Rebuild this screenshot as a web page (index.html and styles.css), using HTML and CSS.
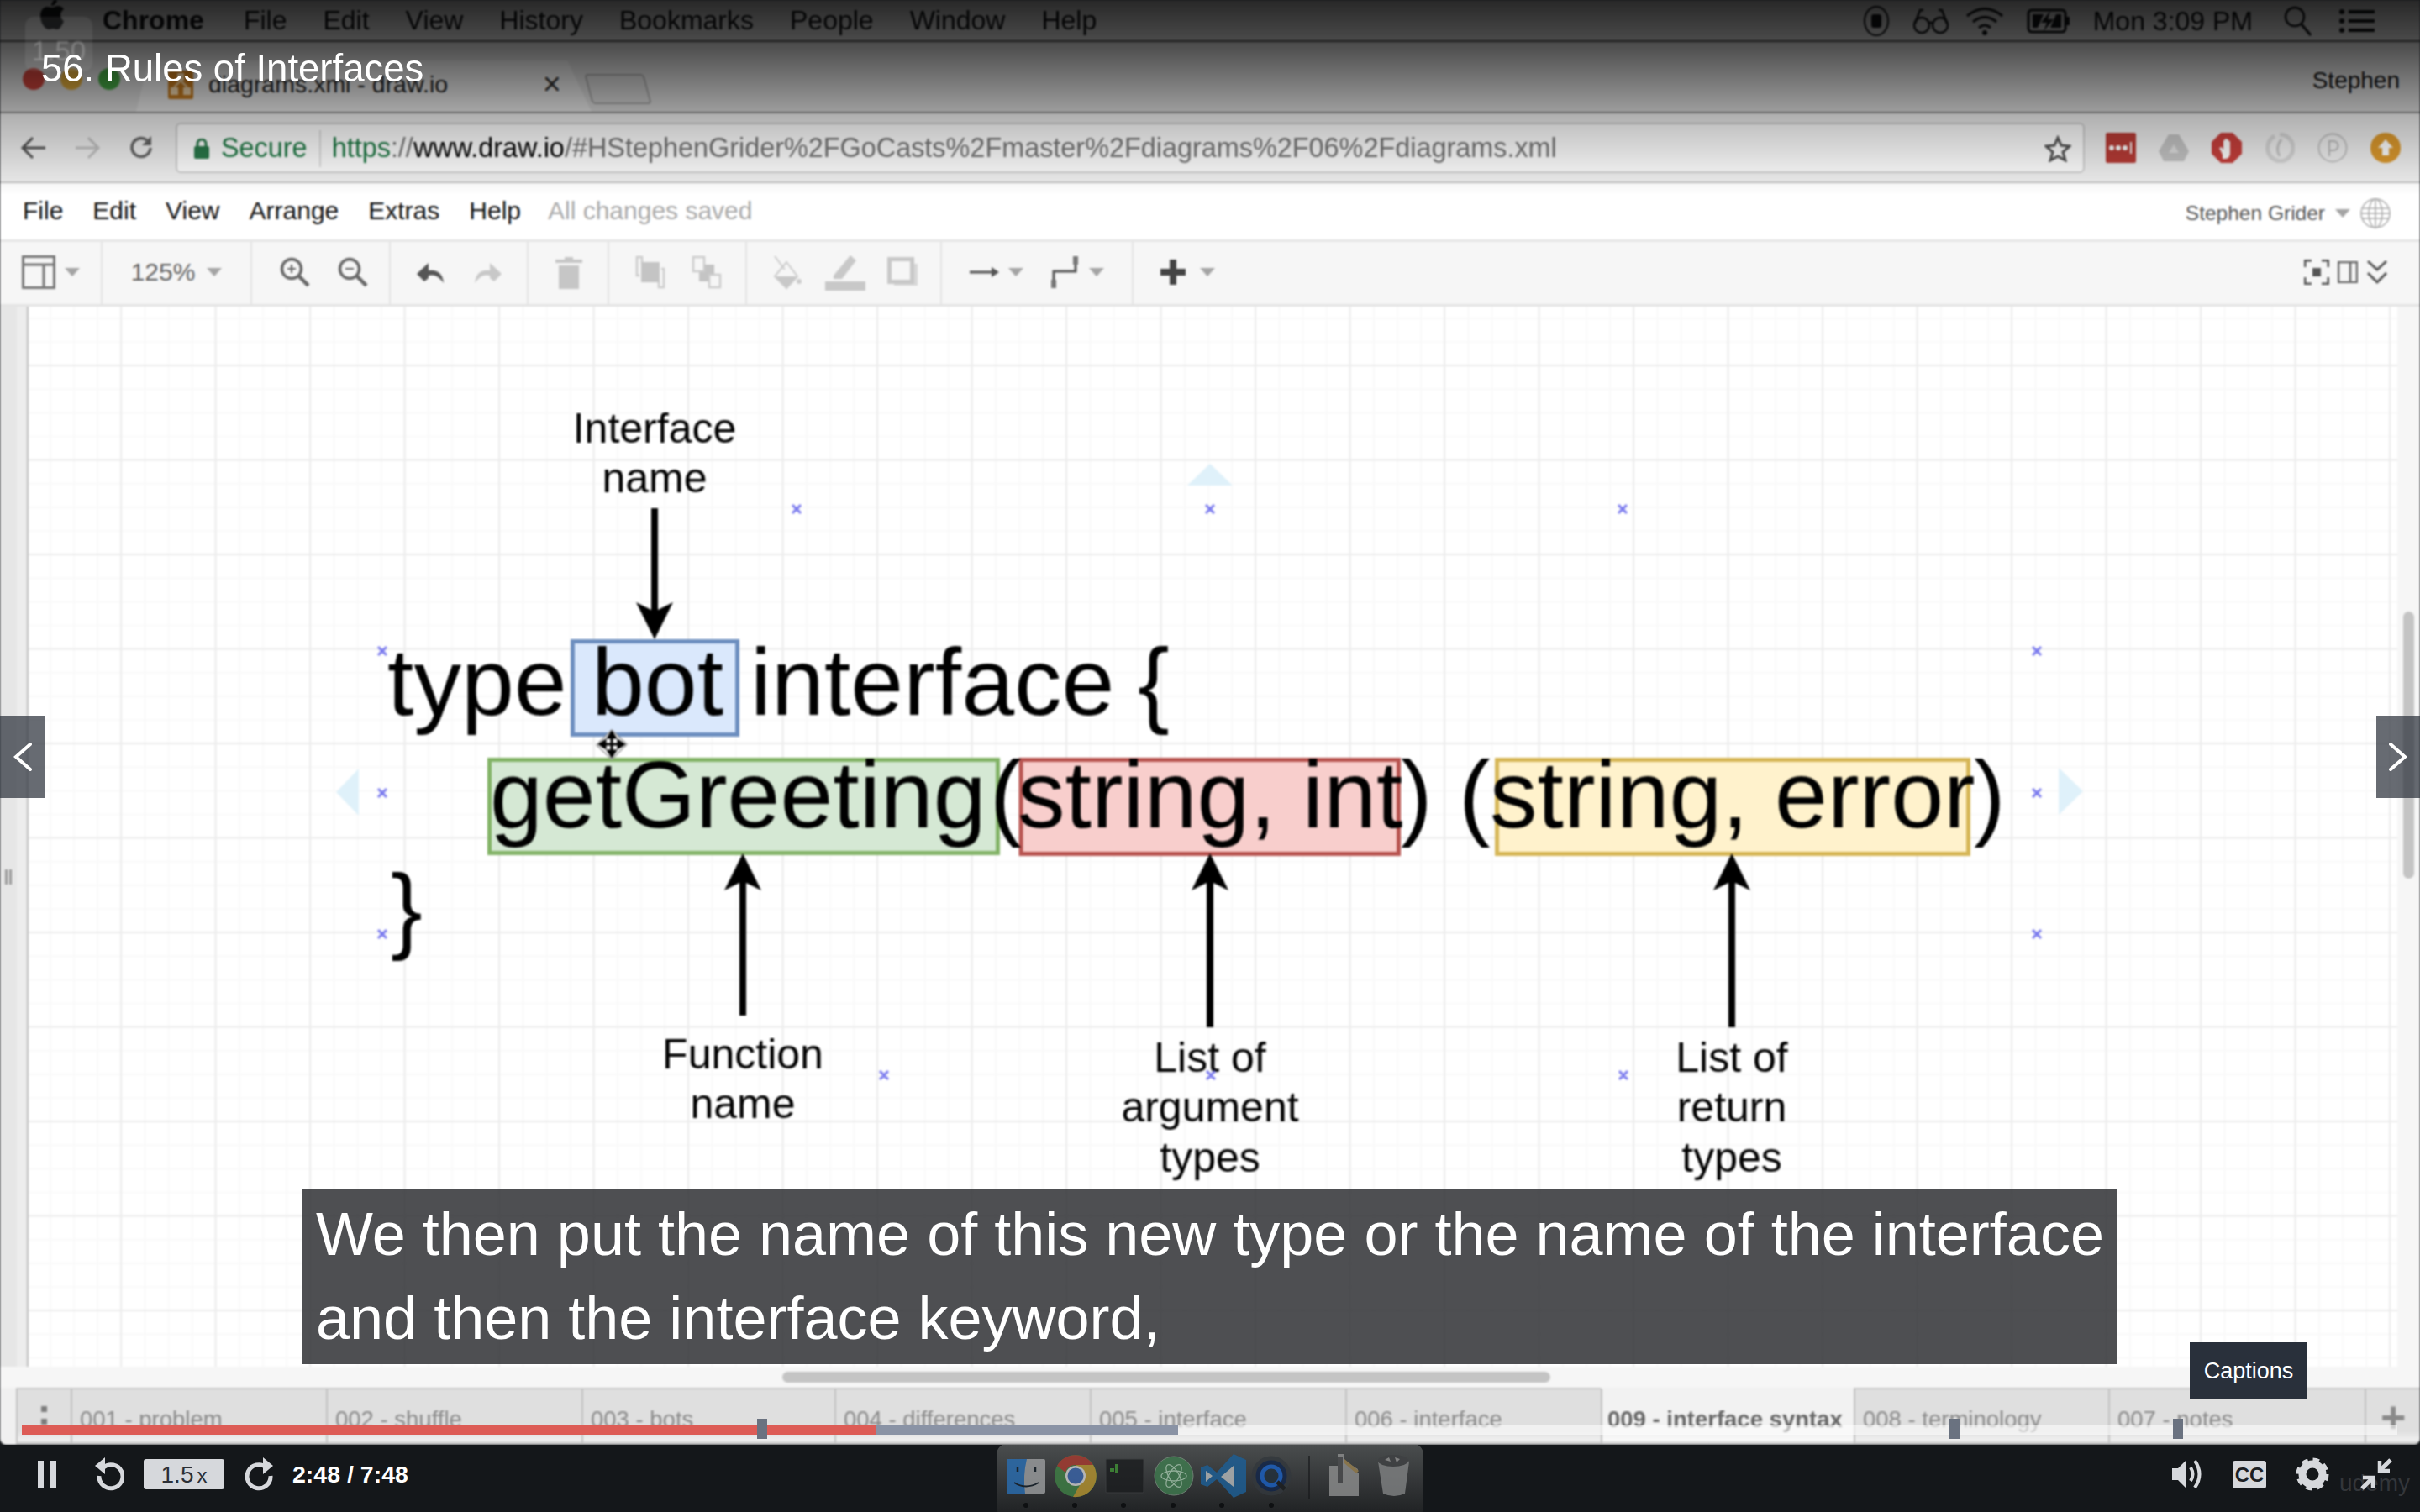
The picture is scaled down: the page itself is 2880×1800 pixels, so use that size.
FILE: index.html
```html
<!DOCTYPE html>
<html lang="en">
<head>
<meta charset="utf-8">
<title>56. Rules of Interfaces</title>
<link rel="stylesheet" href="styles.css">
</head>
<body>
<div class="player">
  <div class="screen">
    <header class="menubar">
      <svg class="apple" width="28" height="36" viewBox="0 0 28 36"><path d="M20 0c0 4-3 8-7 8 0-4 3-8 7-8zM14 10c2 0 4-2 7-2 3 0 5 1 7 4-3 2-4 4-4 7 0 3 2 6 4 7-2 5-5 10-8 10-2 0-3-1-5-1s-3 1-5 1C5 36 0 27 0 20 0 13 4 9 8 9c2 0 4 1 6 1z" fill="#15171a"/></svg>
      <span class="mb-item mb-app">Chrome</span>
      <span class="mb-item">File</span><span class="mb-item">Edit</span><span class="mb-item">View</span><span class="mb-item">History</span><span class="mb-item">Bookmarks</span><span class="mb-item">People</span><span class="mb-item">Window</span><span class="mb-item">Help</span>
      <div class="mb-status">
        <svg width="32" height="38" viewBox="0 0 32 38"><ellipse cx="16" cy="19" rx="14" ry="17" fill="none" stroke="#15171a" stroke-width="2"/><rect x="10" y="11" width="12" height="16" rx="3" fill="#15171a"/></svg>
        <svg class="mb-glasses" width="44" height="34" viewBox="0 0 44 34"><g fill="none" stroke="#15171a" stroke-width="2.500"><circle cx="11" cy="22" r="9"/><circle cx="33" cy="22" r="9"/><path d="M20 20q2-3 4 0M3 20 9 4h4M41 20 35 4h-4"/></g></svg>
        <svg width="46" height="36" viewBox="0 0 46 36"><g fill="none" stroke="#15171a" stroke-width="3"><path d="M2 12q21-17 42 0M9 19q14-11 28 0M16 26q7-6 14 0"/></g><circle cx="23" cy="32" r="3" fill="#15171a"/></svg>
        <svg width="52" height="30" viewBox="0 0 52 30"><rect x="2" y="2" width="44" height="26" rx="4" fill="none" stroke="#15171a" stroke-width="3"/><rect x="47" y="10" width="4" height="10" fill="#15171a"/><path d="M7 7h13l-7 16H7zM41 23H28l7-16h6zM28 3 17 17h7l-4 10 12-14h-7z" fill="#15171a"/></svg>
        <span class="mb-clock">Mon 3:09 PM</span>
        <svg width="36" height="38" viewBox="0 0 36 38"><circle cx="14" cy="14" r="11" fill="none" stroke="#15171a" stroke-width="2.500"/><path d="m22 23 11 13" stroke="#15171a" stroke-width="3"/></svg>
        <svg class="mb-list" width="42" height="30" viewBox="0 0 42 30"><g fill="#15171a"><circle cx="3" cy="4" r="3"/><circle cx="3" cy="15" r="3"/><circle cx="3" cy="26" r="3"/><rect x="11" y="2" width="31" height="4"/><rect x="11" y="13" width="31" height="4"/><rect x="11" y="24" width="31" height="4"/></g></svg>
      </div>
    </header>

    <div class="tabstrip">
      <div class="lights"><i class="light red"></i><i class="light amber"></i><i class="light green"></i></div>
      <div class="tab">
        <svg width="30" height="34" viewBox="0 0 30 34"><rect width="30" height="34" rx="2" fill="#c47a1e"/><rect x="11" y="3" width="8" height="9" fill="#f3d9ae"/><rect x="3" y="20" width="9" height="9" fill="#f3d9ae"/><rect x="18" y="20" width="9" height="9" fill="#f3d9ae"/><path d="m15 12-8 8m8-8 8 8" stroke="#f3d9ae" stroke-width="2"/></svg>
        <span class="tab-title">diagrams.xml - draw.io</span>
        <span class="tab-close">×</span>
      </div>
      <div class="newtab"></div>
      <span class="profile">Stephen</span>
    </div>

    <div class="addressrow">
      <svg class="nav" width="32" height="30" viewBox="0 0 32 30"><path d="M30 15H4m11-12L3 15l12 12" fill="none" stroke="#555" stroke-width="3"/></svg>
      <svg class="nav" width="32" height="30" viewBox="0 0 32 30"><path d="M2 15h26M17 3l12 12-12 12" fill="none" stroke="#c4c4c4" stroke-width="3"/></svg>
      <svg class="nav" width="32" height="32" viewBox="0 0 32 32"><path d="M27 16a11 11 0 1 1-4-9" fill="none" stroke="#666" stroke-width="3.500"/><path d="M28 2v11H17z" fill="#666"/></svg>
      <div class="omnibox">
        <svg width="18" height="24" viewBox="0 0 18 24"><rect y="9" width="18" height="15" rx="2" fill="#2a7a4b"/><path d="M4 10V6a5 5 0 0 1 10 0v4" fill="none" stroke="#2a7a4b" stroke-width="3"/></svg>
        <span class="secure">Secure</span>
        <i class="omni-div"></i>
        <span class="url"><span class="u-https">https</span><span class="u-rest">://</span><span class="u-host">www.draw.io</span><span class="u-rest">/#HStephenGrider%2FGoCasts%2Fmaster%2Fdiagrams%2F06%2Fdiagrams.xml</span></span>
        <svg class="star" width="32" height="32" viewBox="0 0 32 32"><path d="m16 3 4 9 10 1-8 7 3 10-9-5-9 5 3-10-8-7 10-1z" fill="none" stroke="#555" stroke-width="3"/></svg>
      </div>
      <div class="exts">
        <svg width="36" height="36" viewBox="0 0 36 36"><rect width="36" height="36" rx="2" fill="#b83c36"/><g fill="#fff"><circle cx="7" cy="18" r="3"/><circle cx="15" cy="18" r="3"/><circle cx="23" cy="18" r="3"/><rect x="29" y="11" width="2" height="14"/></g></svg>
        <svg width="36" height="36" viewBox="0 0 36 36"><path d="M12 2h12l12 20-6 12H6L0 22z" fill="#c6c6c6"/><path d="m18 14 6 10H12z" fill="#e2e2e2"/></svg>
        <svg width="36" height="36" viewBox="0 0 36 36"><path d="M11 0h14l11 11v14L25 36H11L0 25V11z" fill="#c8403c"/><path d="M13 26 9 18l3-1 2 3V9h2v8-10h2v10-9h2v9-7h2v14q0 6-5 7h-4z" fill="#fff"/></svg>
        <svg width="36" height="36" viewBox="0 0 36 36"><path d="M18 2a16 16 0 0 1 0 32 16 16 0 0 1-6-30" fill="none" stroke="#d8d8d8" stroke-width="5"/><path d="M20 8q-8 10-2 20" fill="none" stroke="#c8c8c8" stroke-width="3"/></svg>
        <svg width="36" height="36" viewBox="0 0 36 36"><circle cx="18" cy="18" r="16.500" fill="none" stroke="#c4c4c4" stroke-width="2"/><path d="M14 28V10h5a5 5 0 0 1 0 11h-5" fill="none" stroke="#bcbcbc" stroke-width="2"/></svg>
        <svg width="36" height="36" viewBox="0 0 36 36"><circle cx="18" cy="18" r="18" fill="#dd9a2e"/><path d="m18 8 9 10h-5v9h-8v-9H9z" fill="#fff"/></svg>
      </div>
    </div>

    <div class="appmenu">
      <span>File</span><span>Edit</span><span>View</span><span>Arrange</span><span>Extras</span><span>Help</span><span class="saved">All changes saved</span>
      <div class="app-user">
        <span>Stephen Grider</span>
        <i class="caret"></i>
        <svg width="36" height="36" viewBox="0 0 36 36"><g fill="none" stroke="#aaa" stroke-width="1.500"><circle cx="18" cy="18" r="17"/><ellipse cx="18" cy="18" rx="8" ry="17"/><path d="M18 1v34M2 12h32M2 24h32M1 18h34"/></g></svg>
      </div>
    </div>

    <div class="toolbar">
      <div class="tg tg1">
        <svg width="40" height="40" viewBox="0 0 40 40"><path d="M1.500 1.500h37v37h-37zM1.500 11h37M26 11v27" fill="none" stroke="#777" stroke-width="3"/></svg>
        <i class="caret"></i>
      </div>
      <div class="tg tg2"><span class="zoomval">125%</span><i class="caret"></i></div>
      <div class="tg tg3">
        <svg width="36" height="36" viewBox="0 0 36 36"><circle cx="14" cy="14" r="11.500" fill="none" stroke="#666" stroke-width="3.500"/><path d="m22 22 12 12" stroke="#666" stroke-width="4.500"/><path d="M14 9v10M9 14h10" stroke="#666" stroke-width="2"/></svg>
        <svg width="36" height="36" viewBox="0 0 36 36"><circle cx="14" cy="14" r="11.500" fill="none" stroke="#666" stroke-width="3.500"/><path d="m22 22 12 12" stroke="#666" stroke-width="4.500"/><path d="M9 14h10" stroke="#666" stroke-width="2"/></svg>
      </div>
      <div class="tg tg4">
        <svg width="36" height="28" viewBox="0 0 36 28"><path d="M34 27q-2-17-18-15V3L2 16l9 9 5-4v-3q10-3 18 9z" fill="#555"/></svg>
        <svg width="36" height="28" viewBox="0 0 36 28"><path d="M2 27q2-17 18-15V3l14 13-9 9-5-4v-3q-10-3-18 9z" fill="#c8c8c8"/></svg>
      </div>
      <div class="tg tg5">
        <svg width="32" height="40" viewBox="0 0 32 40"><path d="M11 2h10v3h11v4H0V5h11zM4 12h24v28H4z" fill="#c6c6c6"/></svg>
      </div>
      <div class="tg tg6">
        <svg width="36" height="40" viewBox="0 0 36 40"><path d="M8 10V2H2v22h3M28 30v8h6V16h-3" fill="none" stroke="#ccc" stroke-width="2.500"/><rect x="7" y="8" width="22" height="24" fill="#c4c4c4"/></svg>
        <svg width="36" height="40" viewBox="0 0 36 40"><rect x="9" y="11" width="18" height="20" fill="#c4c4c4"/><rect x="2" y="2" width="13" height="17" fill="#f6f6f6" stroke="#ccc" stroke-width="2.500"/><rect x="21" y="23" width="13" height="15" fill="#f6f6f6" stroke="#ccc" stroke-width="2.500"/></svg>
      </div>
      <div class="tg tg7">
        <svg width="36" height="42" viewBox="0 0 36 42"><path d="M2 2 14 18M16 9l13 17-13 14L2 26z" fill="none" stroke="#ccc" stroke-width="2"/><path d="M3 26h25L16 40z" fill="#c8c8c8"/><circle cx="31" cy="32" r="3" fill="#ccc"/></svg>
        <svg width="48" height="44" viewBox="0 0 48 44"><path d="M10 26 30 2l7 6-17 22H10z" fill="#c8c8c8"/><rect y="33" width="48" height="11" fill="#c8c8c8"/></svg>
        <svg width="36" height="36" viewBox="0 0 36 36"><path d="M8 32h26V8" fill="none" stroke="#d8d8d8" stroke-width="4"/><rect x="2.500" y="2.500" width="27" height="27" fill="#f6f6f6" stroke="#c8c8c8" stroke-width="5"/></svg>
      </div>
      <div class="tg tg8">
        <svg width="36" height="18" viewBox="0 0 36 18"><path d="M0 9h28" stroke="#555" stroke-width="3"/><path d="m26 3 9 6-9 6z" fill="#555"/></svg>
        <i class="caret"></i>
        <svg class="tg8-way" width="36" height="38" viewBox="0 0 36 38"><path d="M4 36V18h26V4" fill="none" stroke="#555" stroke-width="3"/><rect x="1" y="28" width="6" height="10" fill="#777"/><rect x="27" y="0" width="6" height="10" fill="#777"/></svg>
        <i class="caret"></i>
      </div>
      <div class="tg tg9">
        <svg width="30" height="30" viewBox="0 0 30 30"><path d="M15 0v30M0 15h30" stroke="#444" stroke-width="8"/></svg>
        <i class="caret"></i>
      </div>
      <div class="tg-right">
        <svg width="30" height="30" viewBox="0 0 30 30"><path d="M1 9V1h8M21 1h8v8M29 21v8h-8M9 29H1v-8" fill="none" stroke="#555" stroke-width="3"/><rect x="10" y="10" width="10" height="10" fill="#555"/></svg>
        <svg width="24" height="26" viewBox="0 0 24 26"><path d="M1 1h22v24H1zM15 1v24" fill="none" stroke="#666" stroke-width="2.500"/></svg>
        <svg width="26" height="30" viewBox="0 0 26 30"><path d="m2 2 11 10L24 2M2 16l11 11 11-11" fill="none" stroke="#555" stroke-width="3"/></svg>
      </div>
    </div>

    <div class="workarea">
      <div class="gutter"><i class="gutter-mark"></i></div>
      <div class="canvas">
        <svg class="diagram" width="2819" height="1262" viewBox="34 365 2819 1262">
          <g class="hover-tri">
            <path d="m1440 552 27 26h-54z"/>
            <path d="m400 943 27-28v56z"/>
            <path d="m2479 942-29-28v56z"/>
          </g>
          <g class="shape">
            <rect class="s-blue" x="681.500" y="763.500" width="196" height="111"/>
            <rect class="s-green" x="582.500" y="904.500" width="605" height="111"/>
            <rect class="s-red" x="1215" y="904.500" width="449.500" height="112"/>
            <rect class="s-yellow" x="1781.500" y="904.500" width="561" height="112"/>
          </g>
          <g class="code">
            <text x="461" y="851">type</text>
            <text x="704" y="851">bot</text>
            <text x="893" y="851">interface</text>
            <text x="1354" y="851">{</text>
            <text x="583" y="985">getGreeting</text>
            <text x="1178" y="985">(</text>
            <text x="1211" y="985">string, int</text>
            <text x="1667" y="985">)</text>
            <text x="1736" y="985">(</text>
            <text x="1773" y="985">string, error</text>
            <text x="2349" y="985">)</text>
            <text x="465" y="1120">}</text>
          </g>
          <g class="label">
            <text x="779" y="527">Interface</text>
            <text x="779" y="586">name</text>
            <text x="884" y="1272">Function</text>
            <text x="884" y="1331">name</text>
            <text x="1440" y="1276">List of</text>
            <text x="1440" y="1335">argument</text>
            <text x="1440" y="1395">types</text>
            <text x="2061" y="1276">List of</text>
            <text x="2061" y="1335">return</text>
            <text x="2061" y="1395">types</text>
          </g>
          <g class="arrows">
            <path d="M779 605v125"/>
            <path d="M884 1045v164"/>
            <path d="M1440 1045v178"/>
            <path d="M2061 1045v178"/>
          </g>
          <g class="heads">
            <path d="m779 761-22-44 22 11 22-11z"/>
            <path d="m884 1016-22 44 22-11 22 11z"/>
            <path d="m1440 1016-22 44 22-11 22 11z"/>
            <path d="m2061 1016-22 44 22-11 22 11z"/>
          </g>
          <g class="marks">
            <path d="M943 601l10 10m0-10-10 10M1435 601l10 10m0-10-10 10M1926 601l10 10m0-10-10 10M450 770l10 10m0-10-10 10M2419 770l10 10m0-10-10 10M450 939l10 10m0-10-10 10M2419 939l10 10m0-10-10 10M450 1107l10 10m0-10-10 10M2419 1107l10 10m0-10-10 10M1047 1275l10 10m0-10-10 10M1436 1275l10 10m0-10-10 10M1927 1275l10 10m0-10-10 10"/>
          </g>
          <g class="cursor">
            <path d="m728 869 18 17-18 18-18-17z"/>
            <path class="cursor-x" d="M728 875v22m-11-11h22M728 872l-4 6h8zM728 900l-4-6h8zM714 886l6-4v8zM742 886l-6-4v8z"/>
          </g>
        </svg>
      </div>
      <div class="vscroll"><i class="vthumb"></i></div>
    </div>

    <div class="hscroll"><i class="hthumb"></i></div>

    <div class="pagetabs">
      <div class="pt-edge"></div>
      <div class="pt pt-menu"><i></i><i></i></div>
      <div class="pt">001 - problem</div>
      <div class="pt">002 - shuffle</div>
      <div class="pt">003 - bots</div>
      <div class="pt">004 - differences</div>
      <div class="pt">005 - interface</div>
      <div class="pt">006 - interface</div>
      <div class="pt pt-active">009 - interface syntax</div>
      <div class="pt">008 - terminology</div>
      <div class="pt">007 - notes</div>
      <div class="pt pt-add">+</div>
    </div>

    <div class="topshade"></div>
    <div class="ghost-speed">1.50</div>
  </div>

  <footer class="controls">
    <div class="ctl-left">
      <div class="pause"><i></i><i></i></div>
      <svg class="c-icon" width="36" height="40" viewBox="0 0 36 40"><path d="M9 10a14 14 0 1 1-5 10" transform="translate(2 2)" fill="none" stroke="#d6d8dc" stroke-width="5"/><path d="M13 0v20L1 10z" fill="#d6d8dc"/></svg>
      <div class="speed">1.5<small>x</small></div>
      <svg class="c-icon c-fwd" width="36" height="40" viewBox="0 0 36 40"><path d="M27 12a14 14 0 1 0 5 10" fill="none" stroke="#d6d8dc" stroke-width="5"/><path d="M23 0v20l12-10z" fill="#d6d8dc"/></svg>
      <span class="time">2:48 / 7:48</span>
    </div>
    <svg class="dock" width="508" height="80" viewBox="1186 1720 508 80">
      <defs><linearGradient id="dockfill" x1="0" y1="0" x2="0" y2="1"><stop offset="0" stop-color="#4b4e4f"/><stop offset="1" stop-color="#1d1f21"/></linearGradient></defs>
      <rect fill="url(#dockfill)" x="1186" y="1718" width="508" height="90" rx="14"/>
      <g class="dock-icons">
      <rect x="1199" y="1737" width="45" height="41" rx="2" fill="#9a9c9e"/>
      <path d="M1199 1737h23q-5 20-2 41h-21z" fill="#2a6db0"/>
      <path d="M1207 1765q14 9 29 0" fill="none" stroke="#15202a" stroke-width="2"/>
      <path d="M1211 1746v6M1232 1746v6" stroke="#15202a" stroke-width="2.500"/>
      <circle cx="1280" cy="1757" r="25" fill="#3f7f45"/>
      <path d="M1258 1745a25 25 0 0 1 43-1h-21q-10 0-12 9z" fill="#a63a30"/>
      <path d="M1301 1744a25 25 0 0 1-24 38l11-19q4-8-8-19z" fill="#b39230"/>
      <circle cx="1280" cy="1757" r="12" fill="#d0d0d0"/><circle cx="1280" cy="1757" r="9.500" fill="#3a64a8"/>
      <rect x="1316" y="1737" width="45" height="40" rx="1" fill="#1b1d1f" stroke="#3c3e40"/>
      <path d="M1321 1750h5M1329 1743v11" stroke="#3d8b33" stroke-width="4"/>
      <circle cx="1397" cy="1757" r="23" fill="#3f7a4f" stroke="#7b8f80" stroke-width="1"/>
      <g fill="none" stroke="#a6c8ae" stroke-width="1.300"><ellipse cx="1397" cy="1757" rx="15" ry="6"/><ellipse cx="1397" cy="1757" rx="15" ry="6" transform="rotate(60 1397 1757)"/><ellipse cx="1397" cy="1757" rx="15" ry="6" transform="rotate(-60 1397 1757)"/></g>
      <path d="m1429 1747 8-3 11 9 20-22 15 7v38l-15 7-20-22-11 9-8-3z" fill="#1d5f96"/>
      <path d="m1435 1751 8 6-8 7zM1468 1745v25l-15-12z" fill="#b4b8ba"/>
      <circle cx="1513" cy="1757" r="21" fill="#12264a" stroke="#33383d" stroke-width="5"/>
      <circle cx="1513" cy="1757" r="11" fill="#22303c" stroke="#1a5fc0" stroke-width="5"/>
      <path d="m1520 1764 9 9" stroke="#1b1d1f" stroke-width="5"/>
      <path d="M1558 1733v52" stroke="#17191b" stroke-width="1.500"/>
      <path d="M1582 1745h10v-14h8v8l16 10-1 4 2 0v28h-35z" fill="#8c8d8d"/>
      <path d="M1600 1737l17 14-3 3-14-12z" fill="#98804f"/>
      <rect x="1592" y="1735" width="6" height="30" fill="#4c4d4f"/>
      <path d="M1640 1740q18-12 37 0l-5 38q-13 6-26 0z" fill="#7f8182"/>
      <ellipse cx="1658" cy="1739" rx="18" ry="7" fill="#3f4143"/>
      <path d="M1648 1738l5-3 2 5zM1660 1735l6 2-4 4z" fill="#8f8f8f"/>
      </g>
      <g fill="#0e1012"><circle cx="1221" cy="1792" r="3"/><circle cx="1279" cy="1792" r="3"/><circle cx="1337" cy="1792" r="3"/><circle cx="1396" cy="1792" r="3"/><circle cx="1454" cy="1792" r="3"/><circle cx="1513" cy="1792" r="3"/></g>
    </svg>
    <div class="ctl-right">
      <svg width="36" height="40" viewBox="0 0 36 40"><path d="M0 13h7l10-10v34L7 27H0z" fill="#d6d8dc"/><path d="M22 12q5 8 0 16M27 4q11 16 0 32" fill="none" stroke="#d6d8dc" stroke-width="4"/></svg>
      <div class="cc">CC</div>
      <svg width="40" height="40" viewBox="0 0 40 40"><circle cx="20" cy="20" r="12" fill="none" stroke="#d6d8dc" stroke-width="9"/><circle cx="20" cy="20" r="16" fill="none" stroke="#d6d8dc" stroke-width="7" stroke-dasharray="7 5.570"/></svg>
      <svg width="40" height="40" viewBox="0 0 40 40"><path d="M37 3 26 14M3 37l11-11" stroke="#d6d8dc" stroke-width="5"/><path d="M24 4v12h12M16 36V24H4" fill="none" stroke="#d6d8dc" stroke-width="4.500"/></svg>
    </div>
    <span class="watermark">udemy</span>
  </footer>

  <div class="title">56. Rules of Interfaces</div>
  <div class="side side-l"><svg width="22" height="34" viewBox="0 0 22 34"><path d="M20 2 3 17l17 15" fill="none" stroke="#fff" stroke-width="4" stroke-linecap="round"/></svg></div>
  <div class="side side-r"><svg width="22" height="34" viewBox="0 0 22 34"><path d="m2 2 17 15L2 32" fill="none" stroke="#fff" stroke-width="4" stroke-linecap="round"/></svg></div>
  <div class="caption">We then put the name of this new type or the name of the interface<br>and then the interface keyword,</div>
  <div class="progress">
    <i class="p-played"></i><i class="p-buffer"></i>
    <i class="cue cue1"></i><i class="cue cue2"></i><i class="cue cue3"></i>
  </div>
  <div class="tooltip">Captions</div>
</div>
</body>
</html>
```

FILE: styles.css
```css
*{box-sizing:border-box}
html,body{margin:0;padding:0;background:#000}
body{width:2880px;height:1800px;overflow:hidden;font-family:"Liberation Sans",Arial,sans-serif}
.player{position:relative;width:2880px;height:1800px;display:flex;flex-direction:column;background:#14171a}
.screen{position:relative;flex:none;height:1720px;display:flex;flex-direction:column;filter:blur(.9px);background:#f0f0f0;border-radius:0 0 8px 8px;overflow:hidden}

/* mac menu bar */
.menubar{height:50px;flex:none;display:flex;align-items:center;background:#dcdcdc;border-bottom:2px solid #555;padding-left:48px;font-size:32px;color:#101214}
.apple{margin-right:46px;margin-top:-14px}
.mb-item{margin-right:43px}
.mb-app{font-weight:700;margin-right:47px}
.mb-status{margin-left:auto;display:flex;align-items:center;gap:27px;padding-right:54px;padding-top:2px}
.mb-glasses{margin-right:-8px}
.mb-clock{margin-right:9px}
.mb-list{margin-left:4px}

/* tabs */
.tabstrip{height:85px;flex:none;display:flex;align-items:flex-end;background:#d9d9d9;border-bottom:2px solid #8e8e8e;position:relative}
.lights{align-self:flex-start;margin:31px 0 0 27px;display:flex;gap:19px}
.light{width:26px;height:26px;border-radius:50%;display:block}
.red{background:#c8423a}.amber{background:#dca83a}.green{background:#45a844}
.tab{margin-left:19px;width:542px;height:61px;display:flex;align-items:center;padding:0 36px 4px 38px;background:#e6e6e6;clip-path:polygon(15px 0,513px 0,542px 100%,0 100%);font-size:28.500px;color:#222}
.tab-title{margin-left:18px}
.tab-close{margin-left:auto;font-size:38px;color:#333}
.newtab{margin:0 0 9px -4px;width:71px;height:36px;background:#d4d4d4;border:2px solid #a8a8a8;border-radius:4px;transform:skewX(15deg)}
.profile{margin-left:auto;align-self:center;padding-right:24px;padding-top:8px;font-size:28px;color:#111}

/* address bar */
.addressrow{height:83px;flex:none;display:flex;align-items:center;padding-left:24px;gap:32px;background:#f1f1f1;border-bottom:2px solid #c4c4c4}
.omnibox{margin-left:-7px;width:2272px;height:60px;flex:none;display:flex;align-items:center;padding:2px 0 0 20px;background:#fff;border:2px solid #d0d0d0;border-radius:6px;font-size:32.400px}
.secure{margin-left:14px;color:#1f7a45}
.omni-div{width:2px;height:44px;margin:0 13px 0 14px;background:#ddd}
.url{white-space:nowrap}
.u-https{color:#1f7a45}.u-rest{color:#777}.u-host{color:#000}
.star{margin-left:auto;margin-right:14px}
.exts{display:flex;gap:27px;margin-left:-7px}

/* app menu */
.appmenu{height:70px;flex:none;display:flex;align-items:center;gap:35px;padding:0 0 2px 27px;background:#fff;border-bottom:3px solid #e6e6e6;font-size:30px;color:#111}
.saved{color:#aaa;margin-left:-3px}
.app-user{margin-left:auto;display:flex;align-items:center;gap:12px;padding:6px 35px 0 0;font-size:24.500px;color:#555}
.caret{display:block;width:0;height:0;border-left:9px solid transparent;border-right:9px solid transparent;border-top:10px solid #a4a4a4}

/* toolbar */
.toolbar{height:77px;flex:none;display:flex;align-items:stretch;background:#f6f6f6;border-bottom:3px solid #e4e4e4}
.tg{flex:none;display:flex;align-items:center;justify-content:center;border-right:2px solid #e4e4e4;padding-bottom:3px}
.tg1{width:122px;gap:11px}
.tg2{width:178px;gap:14px}
.tg3{width:165px;gap:33px;padding-left:7px}
.tg4{width:164px;gap:33px}
.tg5{width:96px;padding-left:2px}
.tg6{width:164px;gap:31px;padding-left:2px}
.tg7{width:232px;gap:26px;padding-left:3px}
.tg8{width:228px;gap:10px;padding-right:0}
.tg8-way{margin-left:22px}
.tg9{justify-content:flex-start;padding-left:32px;gap:17px;border:0}
.tg-right{margin-left:auto;display:flex;align-items:center;gap:10px;padding:0 38px 3px 0}
.zoomval{font-size:30px;color:#666}

/* work area */
.workarea{height:1262px;flex:none;display:flex}
.gutter{width:34px;flex:none;position:relative;background:linear-gradient(90deg,#e6e6e6 0 20px,#ededed 20px 31px,#bdbdbd 33px)}
.gutter-mark{position:absolute;left:6px;top:670px;width:8px;height:18px;border-left:3px solid #999;border-right:3px solid #999}
.canvas{position:relative;flex:1;overflow:hidden;background-color:#fff;
  background-image:
    linear-gradient(#ececec 2px,transparent 2px),
    linear-gradient(90deg,#ececec 2px,transparent 2px),
    linear-gradient(#f9f9f9 2px,transparent 2px),
    linear-gradient(90deg,#f9f9f9 2px,transparent 2px);
  background-size:112.5px 112.5px,112.5px 112.5px,28.125px 28.125px,28.125px 28.125px;
  background-position:0 69px,109px 0,0 13px,25px 0}
.diagram{position:absolute;inset:0;display:block}
.hover-tri{fill:#dff1fa}
.shape rect{stroke-width:5}
.s-blue{fill:#dae8fc;stroke:#6c8ebf}
.s-green{fill:#d5e8d4;stroke:#82b366}
.s-red{fill:#f8cecc;stroke:#b85450}
.s-yellow{fill:#fff2cc;stroke:#d6b656}
.code text{font-size:113px;fill:#000}
.label text{font-size:50px;fill:#000;text-anchor:middle}
.arrows path{stroke:#000;stroke-width:8;fill:none}
.heads path{fill:#000}
.marks path{stroke:#7a7aee;stroke-width:3;fill:none}
.cursor path{fill:#fff;stroke:#999;stroke-width:1.500}
.cursor .cursor-x{fill:#000;stroke:#000;stroke-width:3}
.vscroll{width:27px;flex:none;position:relative;background:#f6f6f6}
.vthumb{position:absolute;left:7px;top:363px;width:13px;height:318px;border-radius:7px;background:#c4c4c4}
.hscroll{height:25px;flex:none;background:#f6f6f6;position:relative;display:flex;align-items:center;padding-left:931px}
.hthumb{display:block;width:914px;height:13px;border-radius:7px;background:#c4c4c4}

/* page tabs */
.pagetabs{height:68px;flex:none;display:grid;grid-template-columns:19px 65px 304px 304px 301px 304px 304px 304px 301px 303px 305px 1fr;background:#dcdcdc;font-size:27.500px;color:#8a8a8a}
.pt-edge{background:#f0f0f0}
.pt{border-left:2px solid #c2c2c2;border-top:2px solid #c8c8c8;padding:20px 0 0 9px;background:linear-gradient(#dfdfdf 0 75%,#f0f0f0 92%,#b8b8b8);white-space:nowrap;overflow:hidden}
.pt-menu{display:flex;flex-direction:column;align-items:center;gap:8px;padding:20px 0 0}
.pt-menu i{width:7px;height:7px;background:#7c7c7c;display:block}
.pt-active{background:linear-gradient(#f2f2f2 0 80%,#fafafa 92%,#bbb);font-weight:700;color:#666;border-top-color:#f0f0f0;padding-left:6px}
.pt-add{font-size:52px;font-weight:700;color:#8a8a8a;padding:0 0 0 17px;line-height:66px}

.topshade{position:absolute;left:0;right:0;top:0;height:232px;background:linear-gradient(rgba(0,0,0,.82),rgba(0,0,0,.66) 50px,rgba(0,0,0,.28) 133px,rgba(0,0,0,0))}
.ghost-speed{position:absolute;left:30px;top:20px;width:80px;height:65px;padding-top:22px;border-radius:10px;background:rgba(255,255,255,.07);color:rgba(255,255,255,.22);font-size:33px;text-align:center}

/* player controls */
.controls{flex:none;height:80px;position:relative;display:grid;grid-template-columns:1186px 508px 1fr;background:#14171a}
.ctl-left{display:flex;align-items:center;padding:0 0 10px 45px;gap:23px;color:#fff}
.pause{display:flex;gap:8px;margin-right:22px}
.pause i{display:block;width:7px;height:32px;background:#d6d8dc}
.speed{width:96px;height:36px;background:#d6d8dc;border-radius:3px;color:#2b2f36;font-size:28px;text-align:center;line-height:37px}
.speed small{font-size:24px;margin-left:4px}
.c-fwd{margin-right:-1px}
.time{font-size:28.500px;font-weight:700;color:#fff;white-space:nowrap}
.dock{display:block}
.dock-icons{opacity:.82}
.ctl-right{display:flex;align-items:center;justify-content:flex-start;padding:0 0 10px 891px;gap:36px;position:relative;z-index:1}
.cc{width:40px;height:33px;flex:none;background:#d6d8dc;border-radius:3px;color:#1c1f24;font-size:24px;font-weight:700;text-align:center;line-height:34px;margin-right:-1px}
.watermark{position:absolute;right:12px;top:30px;font-size:28px;color:#33363a}

/* overlays */
.title{position:absolute;left:49px;top:52px;font-size:45.500px;line-height:60px;color:#fff;white-space:nowrap}
.side{position:absolute;top:852px;height:98px;display:flex;align-items:center;justify-content:center;background:rgba(45,50,60,.72)}
.side-l{left:0;width:54px}
.side-r{right:0;width:52px}
.caption{position:absolute;left:360px;top:1416px;width:2160px;height:208px;padding:3px 0 0 16px;background:rgba(44,45,49,.84);color:#fff;font-size:72px;line-height:100px;white-space:nowrap}
.progress{position:absolute;left:26px;top:1696px;width:2827px;height:12px;display:flex;background:rgba(255,255,255,.55)}
.progress i{display:block}
.p-played{width:1016px;background:#dd5c56}
.p-buffer{width:360px;background:#8a93a5}
.progress .cue{position:absolute;top:-7px;width:12px;height:24px;background:#6a7280}
.cue1{left:875px}.cue2{left:2294px}.cue3{left:2560px}
.tooltip{position:absolute;left:2606px;top:1598px;width:140px;height:68px;background:#29303b;color:#fff;font-size:27px;display:flex;align-items:center;justify-content:center}
```
